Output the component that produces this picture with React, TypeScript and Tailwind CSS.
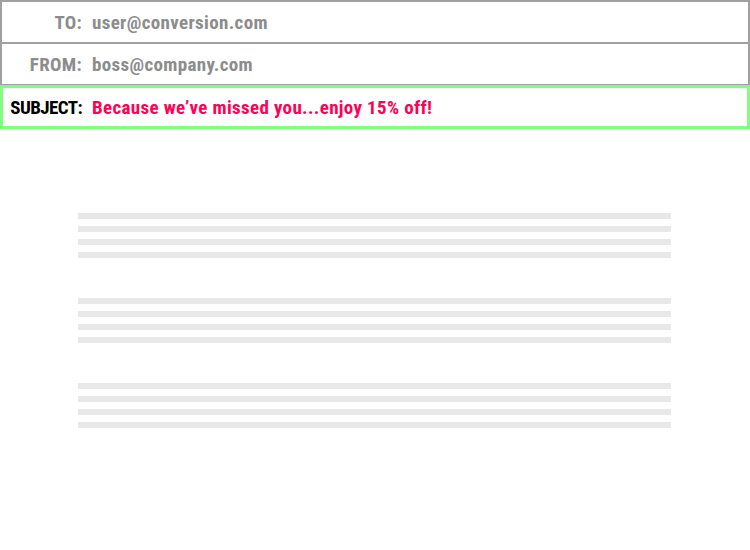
const font = { fontFamily: '"Roboto Condensed", "Open Sans", sans-serif' };

const Row = ({ label, value, active }: { label: string; value: string; active?: boolean }) => (
  <div
    className={
      active
        ? 'flex items-center h-[44px] pt-[2px] border-[3px] border-[#80ff80] -mt-[1px]'
        : 'flex items-center h-[44px] pt-[3px] border-2 border-[#a0a0a0] -mt-[2px] first:mt-0'
    }
  >
    <div
      className={
        active
          ? 'w-[79px] text-right text-[19px] tracking-[-0.6px] font-bold text-black'
          : 'w-[80px] text-right text-[19px] tracking-[0.3px] font-bold text-[#8c8c8c]'
      }
    >
      {label}
    </div>
    <div
      className={`ml-[10px] text-[19px] tracking-[0.35px] font-bold ${active ? 'text-[#ff0055]' : 'text-[#8c8c8c]'}`}
    >
      {value}
    </div>
  </div>
);

const Para = () => (
  <div className="flex flex-col gap-[7px]">
    <div className="h-[6px] bg-[#e8e8e8]" />
    <div className="h-[6px] bg-[#e8e8e8]" />
    <div className="h-[6px] bg-[#e8e8e8]" />
    <div className="h-[6px] bg-[#e8e8e8]" />
  </div>
);

export default function App() {
  return (
    <div className="w-[750px] h-[550px] bg-white overflow-hidden" style={font}>
      <div className="flex flex-col">
        <Row label="TO:" value="user@conversion.com" />
        <Row label="FROM:" value="boss@company.com" />
        <Row label="SUBJECT:" value="Because we’ve missed you...enjoy 15% off!" active />
      </div>
      <div className="mt-[84px] ml-[78px] w-[593px] flex flex-col gap-[40px]">
        <Para />
        <Para />
        <Para />
      </div>
    </div>
  );
}
